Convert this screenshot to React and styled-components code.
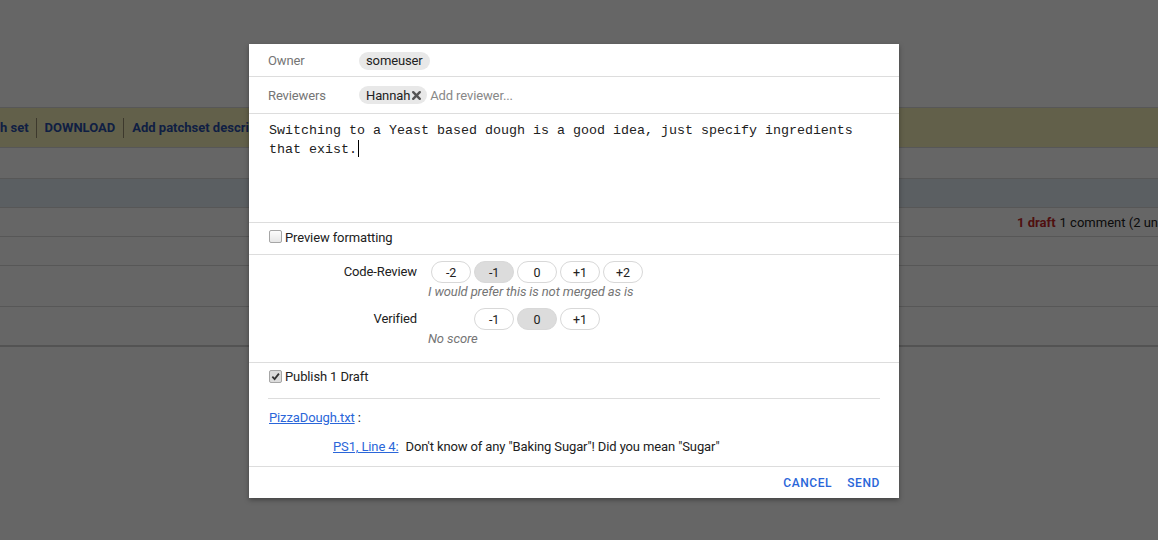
import React from "react";
import styled, { createGlobalStyle } from "styled-components";

const Global = createGlobalStyle`
  html, body { margin: 0; padding: 0; }
  body {
    font-family: Roboto, "Noto Sans", Arial, sans-serif;
    font-size: 13px;
    color: #212121;
    background: #fff;
    overflow: hidden;
  }
`;

const Page = styled.div`
  position: relative;
  width: 1158px;
  height: 540px;
  overflow: hidden;
  background: #fff;
`;

const Header = styled.div`
  height: 107px;
  border-bottom: 1px solid #dadada;
`;

const ActionBar = styled.div`
  height: 39px;
  background: #f4f1b8;
  border-bottom: 1px solid #dadada;
  display: flex;
  align-items: center;
  white-space: nowrap;
  overflow: hidden;
`;

const BarItem = styled.span`
  font-weight: 700;
  color: #2a4fa8;
  padding: ${(p) => (p.$first ? "0 7px 0 0" : "0 8px")};
  line-height: 20px;
  border-left: ${(p) => (p.$first ? "none" : "1px solid #9a9070")};
`;

const Row = styled.div`
  height: ${(p) => p.$h}px;
  background: ${(p) => p.$bg || "#fff"};
  border-bottom: ${(p) => p.$bw || 1}px solid ${(p) => p.$bc || "#dadada"};
  display: flex;
  align-items: center;
  padding-left: ${(p) => p.$pl || 0}px;
  white-space: nowrap;
`;

const Draft = styled.b`
  color: #c62828;
  margin-right: 4px;
`;

const Overlay = styled.div`
  position: absolute;
  inset: 0;
  background: rgba(0, 0, 0, 0.6);
`;

const Dialog = styled.div`
  position: absolute;
  left: 249px;
  top: 44px;
  width: 650px;
  background: #fff;
  box-shadow: 0 2px 5px rgba(0, 0, 0, 0.35);
  display: flex;
  flex-direction: column;
  letter-spacing: -0.12px;
`;

const Section = styled.div`
  border-bottom: 1px solid #ddd;
  padding: ${(p) => p.$pad || "0 19px"};
  height: ${(p) => (p.$h ? p.$h + "px" : "auto")};
  display: ${(p) => (p.$flex ? "flex" : "block")};
  align-items: center;
  box-sizing: border-box;
`;

const FieldLabel = styled.span`
  width: 91px;
  flex: none;
  color: #757575;
`;

const Chip = styled.span`
  display: inline-flex;
  align-items: center;
  height: 18px;
  padding: 0 ${(p) => (p.$tight ? 5 : 7)}px 0 7px;
  background: #e8e8e8;
  border-radius: 9px;
  color: #212121;
  margin-top: ${(p) => p.$mt || 0}px;
`;

const RemoveX = styled.svg`
  width: 11px;
  height: 11px;
  margin-left: 1px;
`;

const AddInput = styled.span`
  color: #888;
  margin-left: 3px;
`;

const Editor = styled.div`
  height: 109px;
  box-sizing: border-box;
  padding: 8px 20px 0;
  font-family: "Liberation Mono", "DejaVu Sans Mono", monospace;
  font-size: 13.33px;
  letter-spacing: 0;
  line-height: 18px;
  color: #212121;
  border-bottom: 1px solid #ddd;
`;

const Caret = styled.span`
  display: inline-block;
  width: 0;
  height: 17px;
  border-left: 1px solid #000;
  vertical-align: -4px;
  margin-left: 1px;
`;

const CheckRow = styled.label`
  display: flex;
  align-items: center;
  line-height: 16px;
  color: #212121;
`;

const Box = styled.span`
  width: 11px;
  height: 11px;
  border: 1px solid #a6a6a6;
  border-radius: 2px;
  background: ${(p) => (p.$on ? "#dcdcdc" : "linear-gradient(#fcfcfc, #e6e6e6)")};
  margin: 0 3px 2px 1px;
  display: flex;
  align-items: center;
  justify-content: center;
`;

const LabelGrid = styled.div`
  display: grid;
  grid-template-columns: 150px 1fr;
  column-gap: 10px;
`;

const LabelName = styled.div`
  text-align: right;
  height: 22px;
  line-height: 22px;
  padding-right: 1px;
  margin-top: ${(p) => p.$mt || 0}px;
`;

const LabelValues = styled.div`
  margin-top: ${(p) => p.$mt || 0}px;
`;

const Buttons = styled.div`
  display: flex;
  gap: 3px;
  margin-left: 3px;
`;

const VoteBtn = styled.span`
  width: 40px;
  height: 22px;
  box-sizing: border-box;
  border: 1px solid ${(p) => (p.$ghost ? "transparent" : "#d8d8d8")};
  border-radius: 11px;
  background: ${(p) => (p.$sel ? "#dcdcdc" : "#fff")};
  visibility: ${(p) => (p.$ghost ? "hidden" : "visible")};
  display: flex;
  align-items: center;
  justify-content: center;
  font-size: 12.5px;
  color: #212121;
`;

const VoteDesc = styled.div`
  font-style: italic;
  color: #757575;
  line-height: 16px;
  margin-top: 1px;
`;

const Inner = styled.div`
  border-bottom: 1px solid #ddd;
  padding: 6px 0 13px;
`;

const FileLine = styled.div`
  line-height: 16px;
  padding-top: 11px;
  padding-left: 1px;
`;

const Link = styled.a`
  color: #2a66d9;
  text-decoration: underline;
  cursor: pointer;
`;

const CommentLine = styled.div`
  line-height: 16px;
  padding: 13px 0 11px 65px;
  display: flex;
  gap: 7px;
`;

const Actions = styled.div`
  height: 31px;
  display: flex;
  justify-content: flex-end;
  align-items: center;
  gap: 15px;
  padding: 0 19px 0 0;
`;

const ActionBtn = styled.button`
  border: none;
  background: none;
  padding: 0;
  font-family: Roboto, sans-serif;
  font-weight: 500;
  font-size: 12px;
  letter-spacing: 0.6px;
  color: #2a66d9;
  text-transform: uppercase;
  cursor: pointer;
`;

const values = ["-2", "-1", "0", "+1", "+2"];

function Votes({ allowed, selected }) {
  return (
    <Buttons>
      {values.map((v) => (
        <VoteBtn key={v} $ghost={!allowed.includes(v)} $sel={v === selected}>
          {v}
        </VoteBtn>
      ))}
    </Buttons>
  );
}

function Check({ on }) {
  return (
    <Box $on={on}>
      {on && (
        <svg width="9" height="9" viewBox="0 0 10 10">
          <path d="M1.5 5.2 L4 7.8 L8.8 1.8" fill="none" stroke="#333" strokeWidth="2" />
        </svg>
      )}
    </Box>
  );
}

export default function App() {
  return (
    <>
      <Global />
      <Page>
        <Header />
        <ActionBar>
          <BarItem $first>h set</BarItem>
          <BarItem>DOWNLOAD</BarItem>
          <BarItem>Add patchset description</BarItem>
        </ActionBar>
        <Row $h={30} />
        <Row $h={28} $bg="#e4edf4" />
        <Row $h={28} $pl={1017}>
          <Draft>1 draft</Draft>1 comment (2 unresolved)
        </Row>
        <Row $h={28} />
        <Row $h={40} />
        <Row $h={38} $bw={2} $bc="#cfcfcf" />
        <Overlay />
        <Dialog>
          <Section $h={33} $flex>
            <FieldLabel>Owner</FieldLabel>
            <Chip $mt={1}>someuser</Chip>
          </Section>
          <Section $h={37} $flex>
            <FieldLabel>Reviewers</FieldLabel>
            <Chip $tight>
              Hannah
              <RemoveX viewBox="0 0 10 10">
                <path d="M2 2 L8 8 M8 2 L2 8" stroke="#555" strokeWidth="2.2" strokeLinecap="round" />
              </RemoveX>
            </Chip>
            <AddInput>Add reviewer...</AddInput>
          </Section>
          <Editor>
            Switching to a Yeast based dough is a good idea, just specify ingredients
            <br />
            that exist.<Caret />
          </Editor>
          <Section $h={32} $flex $pad="0 19px 2px">
            <CheckRow>
              <Check />
              Preview formatting
            </CheckRow>
          </Section>
          <Section $pad="6px 19px 15px">
            <LabelGrid>
              <LabelName>Code-Review</LabelName>
              <LabelValues>
                <Votes allowed={values} selected="-1" />
                <VoteDesc>I would prefer this is not merged as is</VoteDesc>
              </LabelValues>
              <LabelName $mt={8}>Verified</LabelName>
              <LabelValues $mt={8}>
                <Votes allowed={["-1", "0", "+1"]} selected="0" />
                <VoteDesc>No score</VoteDesc>
              </LabelValues>
            </LabelGrid>
          </Section>
          <Section>
            <Inner>
              <CheckRow>
                <Check on />
                Publish 1 Draft
              </CheckRow>
            </Inner>
            <FileLine>
              <Link>PizzaDough.txt</Link> :
            </FileLine>
            <CommentLine>
              <Link>PS1, Line 4:</Link>
              <span>Don't know of any "Baking Sugar"! Did you mean "Sugar"</span>
            </CommentLine>
          </Section>
          <Actions>
            <ActionBtn>Cancel</ActionBtn>
            <ActionBtn>Send</ActionBtn>
          </Actions>
        </Dialog>
      </Page>
    </>
  );
}
